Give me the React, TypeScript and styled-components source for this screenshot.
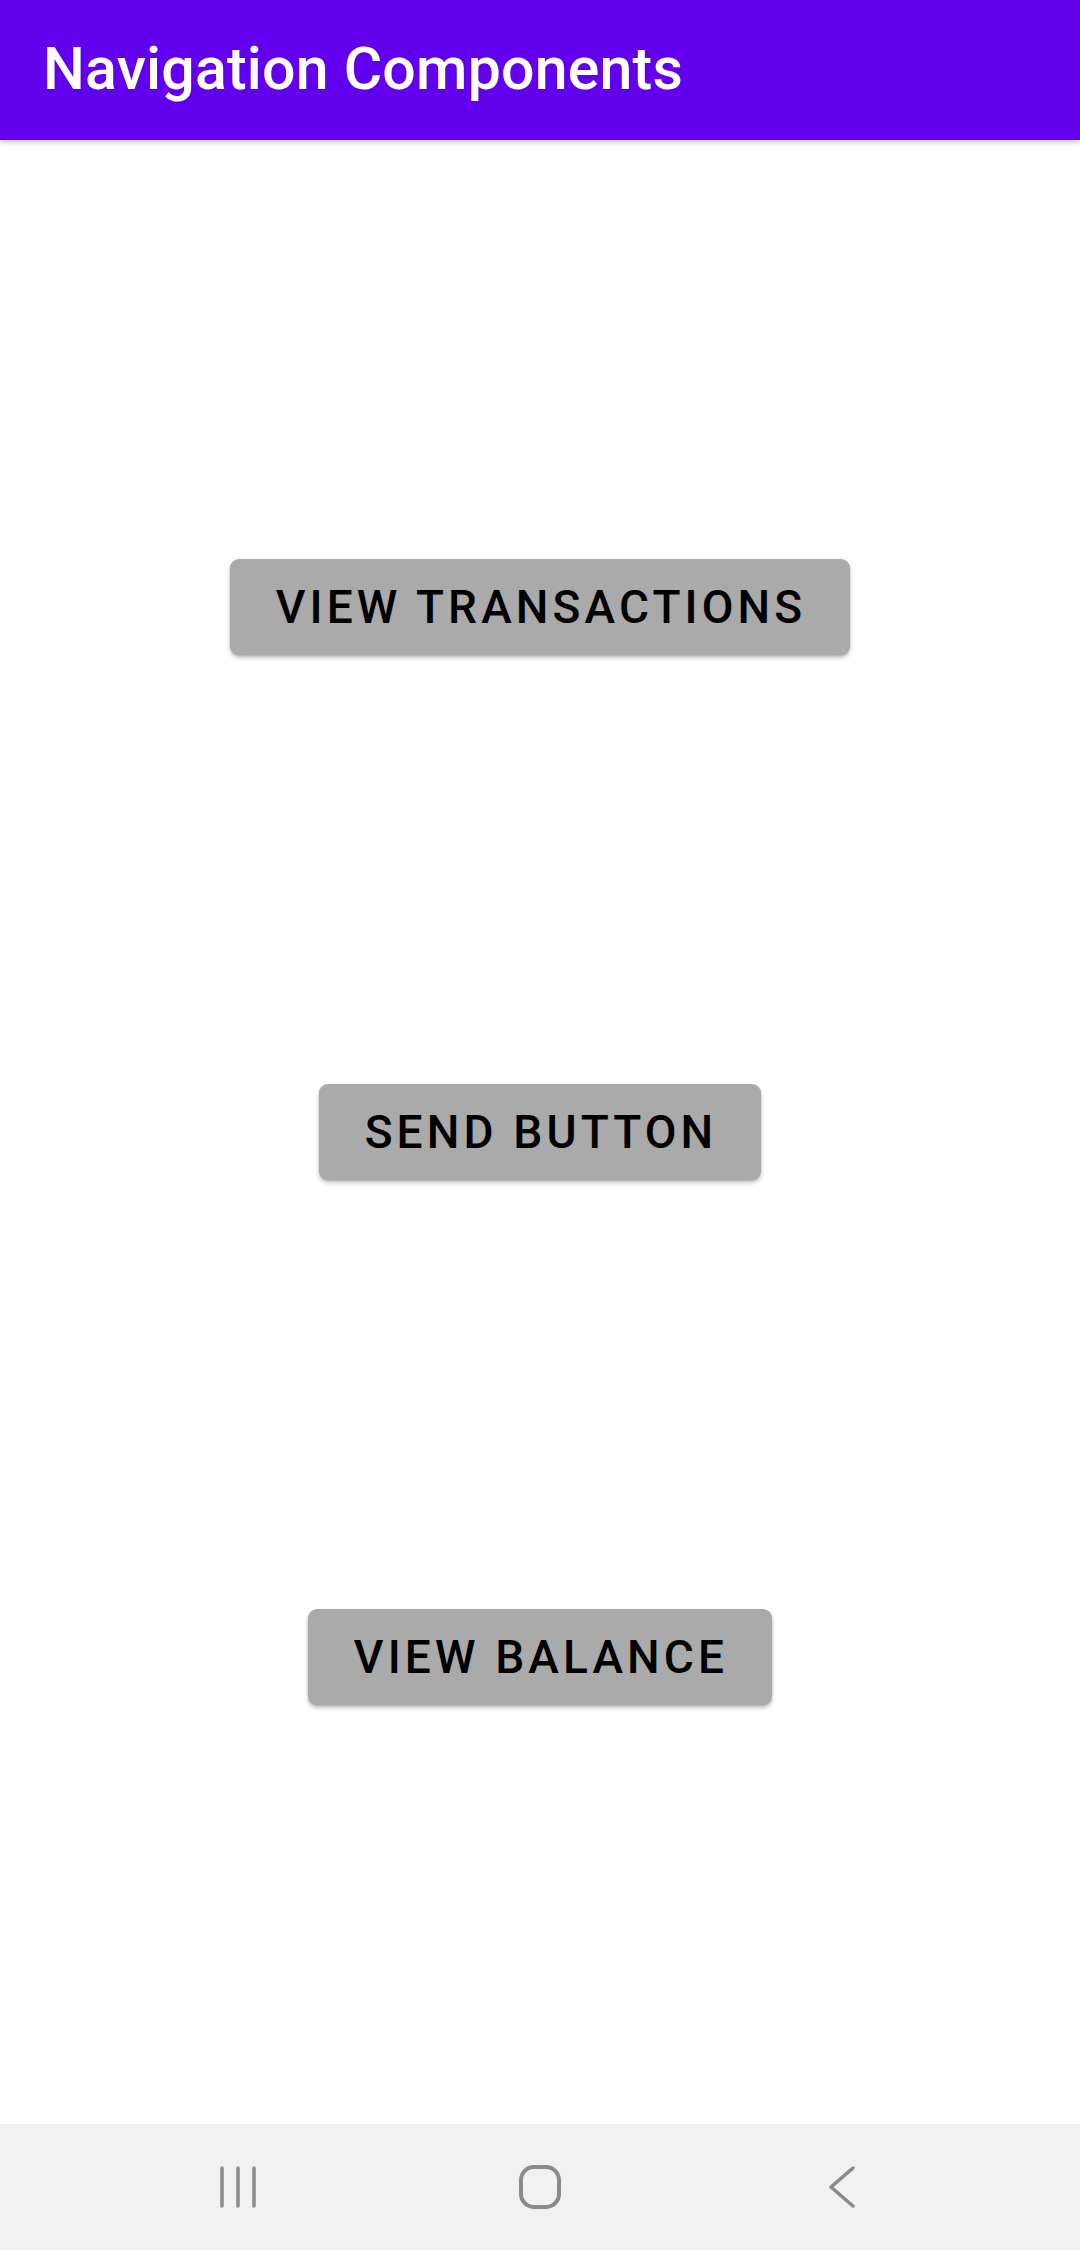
import styled, { createGlobalStyle } from "styled-components";

const GlobalStyle = createGlobalStyle`
  html, body {
    margin: 0;
    padding: 0;
    background: #ffffff;
    font-family: Roboto, "Noto Sans", sans-serif;
  }
  * {
    box-sizing: border-box;
  }
`;

const Screen = styled.div`
  display: flex;
  flex-direction: column;
  width: 1080px;
  height: 2250px;
  background: #ffffff;
  overflow: hidden;
`;

const Toolbar = styled.header`
  display: flex;
  align-items: center;
  height: 140px;
  padding-left: 43px;
  background: #6200ee;
  box-shadow: 0 2px 6px rgba(0, 0, 0, 0.25);
  position: relative;
  z-index: 1;
`;

const Title = styled.h1`
  margin: 0;
  margin-top: -4px;
  color: #ffffff;
  font-family: Roboto, sans-serif;
  font-weight: 500;
  font-size: 59px;
  letter-spacing: 0.2px;
`;

const Content = styled.main`
  flex: 1;
  display: flex;
  flex-direction: column;
  align-items: center;
  padding-top: 419px;
  gap: 429px;
`;

const ActionButton = styled.button`
  height: 96px;
  padding: 0 44px 0 46px;
  border: none;
  border-radius: 9px;
  background: #aaaaaa;
  color: #000000;
  font-family: Roboto, sans-serif;
  font-weight: 500;
  font-size: 46px;
  letter-spacing: 0.09em;
  text-transform: uppercase;
  box-shadow: 0 3px 4px rgba(0, 0, 0, 0.22), 0 1px 2px rgba(0, 0, 0, 0.15);
  cursor: pointer;
`;

const NavBar = styled.nav`
  display: flex;
  align-items: center;
  justify-content: center;
  gap: 242px;
  height: 126px;
  background: #f1f1f1;
`;

const NavIcon = styled.svg`
  width: 60px;
  height: 60px;
  color: #8a8a8a;
`;

const buttons = ["View Transactions", "Send Button", "View Balance"];

export default function App() {
  return (
    <>
      <GlobalStyle />
      <Screen>
        <Toolbar>
          <Title>Navigation Components</Title>
        </Toolbar>
        <Content>
          {buttons.map((label) => (
            <ActionButton key={label}>{label}</ActionButton>
          ))}
        </Content>
        <NavBar>
          <NavIcon viewBox="0 0 60 60" fill="none" stroke="currentColor" strokeWidth="3.5" strokeLinecap="round">
            <line x1="14" y1="11" x2="14" y2="49" />
            <line x1="30" y1="11" x2="30" y2="49" />
            <line x1="46" y1="11" x2="46" y2="49" />
          </NavIcon>
          <NavIcon viewBox="0 0 60 60" fill="none" stroke="currentColor" strokeWidth="4">
            <rect x="11" y="10" width="38" height="40" rx="13" />
          </NavIcon>
          <NavIcon viewBox="0 0 60 60" fill="none" stroke="currentColor" strokeWidth="3.5" strokeLinecap="round" strokeLinejoin="round">
            <polyline points="41,11 19,30 41,49" />
          </NavIcon>
        </NavBar>
      </Screen>
    </>
  );
}
